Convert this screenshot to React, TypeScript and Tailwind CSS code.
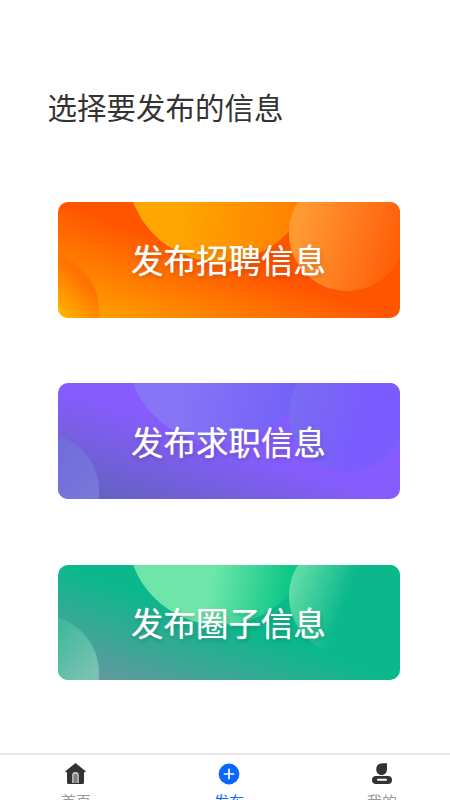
const cards = [
  {
    title: "发布招聘信息",
    bg: "bg-[linear-gradient(to_top_right,#ffaa00_0%,#ff5500_50%,#ff5500_100%)]",
    big: "bg-[linear-gradient(100deg,#ffa600_35%,#ff7a00_100%)]",
    small: "bg-[linear-gradient(105deg,#ff9a33_15%,#ff5500_100%)]",
    corner: "bg-[linear-gradient(45deg,#ffbb00_54%,#ff7400_80%)]",
  },
  {
    title: "发布求职信息",
    bg: "bg-[linear-gradient(to_top_right,#5f62b8_0%,#875cff_50%,#875cff_100%)]",
    big: "bg-[linear-gradient(100deg,#8775f5_35%,#6f5cfb_100%)]",
    small: "bg-[linear-gradient(105deg,#7a6cf0_10%,#7a5cff_60%)]",
    corner: "bg-[linear-gradient(135deg,#6f6cdc_35%,#7a78d8_78%)]",
  },
  {
    title: "发布圈子信息",
    bg: "bg-[linear-gradient(to_top_right,#6f94a2_0%,#0bb88c_50%,#0bb88c_100%)]",
    big: "bg-[linear-gradient(100deg,#6ee6a9_50%,#0fc788_85%)]",
    small: "bg-[linear-gradient(110deg,#72e4ab_5%,#0bb88c_50%)]",
    corner: "bg-[linear-gradient(135deg,#3db79c_35%,#80c4b4_78%)]",
  },
];

function HomeIcon() {
  return (
    <svg className="shrink-0" width="22" height="22" viewBox="0 0 22 22">
      <path d="M10.5 0 L21 8.4 L19 9.4 V19.5 Q19 21 17.5 21 H3.5 Q2 21 2 19.5 V9.4 L0 8.4 Z" fill="#333333" />
      <path d="M7.2 20 V12.4 Q7.2 9 10.5 9 Q13.8 9 13.8 12.4 V20 Z" fill="#d4d4d4" />
      <path d="M8.4 20 V12.8 Q8.4 10.4 10.5 10.4 Q12.6 10.4 12.6 12.8 V20 Z" fill="#808080" />
    </svg>
  );
}

function PlusIcon() {
  return (
    <svg className="shrink-0" width="22" height="22" viewBox="0 0 22 22">
      <circle cx="11" cy="11" r="10.4" fill="#0a66ff" />
      <path d="M11 6.4 V15.6 M6.4 11 H15.6" stroke="#ffffff" strokeWidth="1.7" strokeLinecap="round" />
    </svg>
  );
}

function UserIcon() {
  return (
    <svg className="shrink-0" width="22" height="22" viewBox="0 0 22 22">
      <path d="M16 0.2 V6.6 A5.4 5.4 0 0 1 5.2 6.6 Q5.2 0.2 11.6 0.2 Z" fill="#333333" />
      <path fillRule="evenodd" d="M5 13 H17 A4 4 0 0 1 17 21 H5 A4 4 0 0 1 5 13 Z M7 15.8 A1 1 0 0 0 7 17.8 H15 A1 1 0 0 0 15 15.8 Z" fill="#333333" />
    </svg>
  );
}

const tabs = [
  { label: "首页", icon: <HomeIcon />, color: "text-[#999999]" },
  { label: "发布", icon: <PlusIcon />, color: "text-[#0a66ff]" },
  { label: "我的", icon: <UserIcon />, color: "text-[#999999]" },
];

export default function App() {
  return (
    <div className="flex h-[800px] w-[450px] flex-col overflow-hidden bg-white font-['Noto_Sans_CJK_SC',sans-serif]">
      <h1 className="pl-[47.5px] pt-[85px] text-[29.5px] leading-[42px] font-normal text-[#333333]">选择要发布的信息</h1>

      {/* Cards */}
      <div className="mt-[75px] flex flex-col gap-[65.75px] pl-[58px]">
        {cards.map((card) => (
          <div
            key={card.title}
            className={`relative flex h-[115.5px] w-[342px] items-center justify-center overflow-hidden rounded-[10px] ${card.bg}`}
          >
            <div className={`absolute left-[69px] top-[-126px] h-[186px] w-[186px] rounded-full ${card.big}`} />
            <div className={`absolute left-[231px] top-[-27px] h-[116px] w-[116px] rounded-full ${card.small}`} />
            <div className={`absolute left-[-75px] top-[50px] h-[116px] w-[116px] rounded-full ${card.corner}`} />
            <span className="relative -ml-[1px] -mt-[1px] text-[32.5px] leading-[46px] font-normal text-white [text-shadow:0_0_1px_rgba(255,255,255,0.8),1px_2px_4px_rgba(0,0,0,0.22)]">
              {card.title}
            </span>
          </div>
        ))}
      </div>

      {/* Tab bar */}
      <div className="mt-auto flex h-[47px] shrink-0 justify-between overflow-hidden border-t-2 border-[#e8e8e8] pl-[46px] pr-[38px] pt-[8px]">
        {tabs.map((tab) => (
          <div key={tab.label} className="flex w-[60px] shrink-0 flex-col items-center">
            {tab.icon}
            <span className={`mt-[6px] shrink-0 text-[15px] leading-[20px] ${tab.color}`}>{tab.label}</span>
          </div>
        ))}
      </div>
    </div>
  );
}
